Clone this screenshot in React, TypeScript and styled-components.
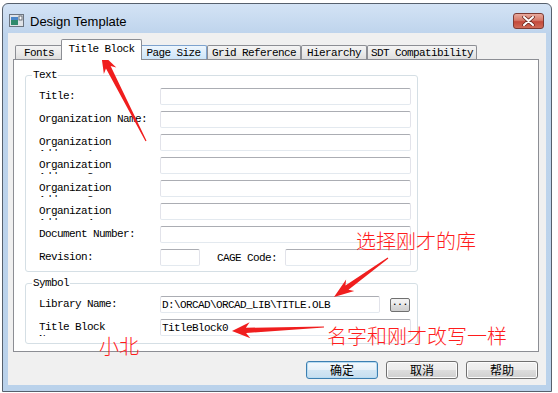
import React from 'react'
import styled, { createGlobalStyle } from 'styled-components'

const GlobalStyle = createGlobalStyle`
  html, body { margin: 0; padding: 0; background: #fff; }
  body { width: 558px; height: 393px; overflow: hidden; }
`

const mono = `'Liberation Mono', 'DejaVu Sans Mono', monospace`
const cjk = `'Noto Sans CJK SC', 'Noto Sans', sans-serif`

const Stage = styled.div`
  position: relative;
  width: 558px;
  height: 393px;
  padding: 3px 0 0 2px;
  box-sizing: border-box;
`

const Window = styled.div`
  width: 550px;
  height: 389px;
  box-sizing: border-box;
  border: 1px solid #56606d;
  border-radius: 6px 6px 0 0;
  background: linear-gradient(180deg, #d3e3f5 0px, #bed4ec 30px, #bad2eb 100%);
  display: flex;
  flex-direction: column;
`

const TitleBar = styled.div`
  height: 29px;
  display: flex;
  align-items: flex-start;
  padding-left: 6px;
`

const TitleIcon = styled.svg`
  margin-top: 10px;
  flex: none;
`

const TitleText = styled.span`
  margin: 10px 0 0 6px;
  font: 13px/15px 'Liberation Sans', Arial, sans-serif;
  color: #000;
`

const CloseButton = styled.div`
  margin: 9px 7px 0 auto;
  width: 31px;
  height: 16px;
  box-sizing: border-box;
  border: 1px solid #7d3a33;
  border-radius: 3px;
  background: linear-gradient(180deg, #e8a99d 0%, #d67a6a 45%, #c4493b 55%, #cf6b58 100%);
  display: flex;
  align-items: center;
  justify-content: center;
`

const Client = styled.div`
  flex: 1;
  margin: 0 5px 6px 5px;
  padding: 6px 7px 0 5px;
  background: #f0f0f0;
  display: flex;
  flex-direction: column;
`

const TabRow = styled.div`
  height: 20px;
  display: flex;
  align-items: flex-end;
  padding-left: 2px;
  position: relative;
  z-index: 1;
`

const Tab = styled.div<{ $w: number; $active?: boolean; $hover?: boolean }>`
  box-sizing: border-box;
  width: ${p => p.$w}px;
  height: ${p => (p.$active ? 21 : 14)}px;
  margin: 0 ${p => (p.$active ? -2 : 0)}px ${p => (p.$active ? -1 : 0)}px;
  position: relative;
  z-index: ${p => (p.$active ? 2 : 1)};
  border: 1px solid ${p => (p.$hover ? '#7da2ce' : '#8c8e94')};
  border-bottom: none;
  border-radius: 2px 2px 0 0;
  background: ${p =>
    p.$active
      ? '#fff'
      : p.$hover
      ? 'linear-gradient(180deg, #eef6fd 0%, #dcedfb 50%, #cde5f8 100%)'
      : 'linear-gradient(180deg, #f4f4f4 0%, #ebebeb 50%, #dedede 100%)'};
  display: flex;
  justify-content: center;
  align-items: ${p => (p.$active ? 'flex-start' : 'center')};
  padding-top: ${p => (p.$active ? 4 : 1)}px;
  font: 11px/11px ${mono};
  letter-spacing: -0.6px;
  color: #000;
  white-space: nowrap;
`

const Panel = styled.div`
  height: 293px;
  box-sizing: border-box;
  border: 1px solid #8c8e94;
  background: #fff;
  padding-left: 11px;
  display: flex;
  flex-direction: column;
`

const Group = styled.fieldset<{ $top: number }>`
  margin: ${p => p.$top}px 0 0 0;
  padding: 0;
  min-width: 0;
  width: 393px;
  box-sizing: border-box;
  border: 1px solid #d5dfe5;
  border-radius: 3px;
`

const Legend = styled.legend`
  margin-left: 6px;
  padding: 0 1px;
  font: 11px/12px ${mono};
  letter-spacing: -0.6px;
  color: #000;
`

const Rows = styled.div<{ $bottom: number }>`
  display: grid;
  grid-template-columns: 121px 1fr;
  grid-auto-rows: 17px;
  row-gap: 6px;
  padding: 7px 6px ${p => p.$bottom}px 13px;
`

// the dialog clips its static labels to the height of the field beside them
const Label = styled.div<{ $max?: number }>`
  height: 17px;
  max-width: ${p => p.$max ?? 112}px;
  box-sizing: border-box;
  padding-top: 2px;
  overflow: hidden;
  font: 11px/12px ${mono};
  letter-spacing: -0.6px;
  color: #000;
`

const Input = styled.input<{ $w?: number }>`
  box-sizing: border-box;
  width: ${p => (p.$w ? `${p.$w}px` : '100%')};
  height: 17px;
  margin: 0;
  padding: 0 1px;
  border: 1px solid #e2e3ea;
  border-top-color: #abadb3;
  border-bottom-color: #e3e9ef;
  border-radius: 2px;
  background: #fff;
  font: 11px/15px ${mono};
  letter-spacing: -0.6px;
  color: #000;
  outline: none;
`

const InlineRow = styled.div`
  display: flex;
  align-items: center;
  min-width: 0;
`

const InlineLabel = styled.span`
  margin-left: 17px;
  width: 68px;
  flex: none;
  font: 11px/12px ${mono};
  letter-spacing: -0.6px;
  color: #000;
`

const Browse = styled.div`
  margin-left: 10px;
  width: 20px;
  height: 14px;
  box-sizing: border-box;
  border: 1px solid #707070;
  border-radius: 2px;
  background: linear-gradient(180deg, #f2f2f2 0%, #ebebeb 50%, #dddddd 50%, #cfcfcf 100%);
  font: bold 9px/9px ${mono};
  text-align: center;
  color: #000;
`

const ButtonRow = styled.div`
  margin: 9px 1px 0 0;
  display: flex;
  justify-content: flex-end;
  gap: 8px;
`

const Button = styled.div<{ $default?: boolean }>`
  width: 72px;
  height: 18px;
  box-sizing: border-box;
  border: 1px solid ${p => (p.$default ? '#3c7fb1' : '#707070')};
  border-radius: 3px;
  background: ${p =>
    p.$default
      ? 'linear-gradient(180deg, #f4f9fd 0%, #e6f1f9 50%, #d3e6f4 50%, #c6def0 100%)'
      : 'linear-gradient(180deg, #f2f2f2 0%, #ebebeb 50%, #dddddd 50%, #cfcfcf 100%)'};
  box-shadow: ${p => (p.$default ? 'inset 0 0 0 1px #b9dcf2' : 'inset 0 0 0 1px #fcfcfc')};
  display: flex;
  align-items: center;
  justify-content: center;
  font: 12px/16px ${cjk};
  color: #000;
`

const Overlay = styled.svg`
  position: absolute;
  left: 0;
  top: 0;
  pointer-events: none;
`

const Note = styled.span<{ $x: number; $y: number }>`
  position: absolute;
  left: ${p => p.$x}px;
  top: ${p => p.$y}px;
  font: 300 20px/20px ${cjk};
  color: #ff1c1c;
  white-space: nowrap;
`

type Pt = [number, number]

// tapered annotation arrow: tip, tail, head length, head half width
const arrow = (tip: Pt, tail: Pt, head: number, half: number) => {
  const [tx, ty] = tip
  const [sx, sy] = tail
  const len = Math.hypot(sx - tx, sy - ty)
  const ux = (sx - tx) / len
  const uy = (sy - ty) / len
  const px = -uy
  const py = ux
  const at = (d: number, w: number): string => `${tx + ux * d + px * w},${ty + uy * d + py * w}`
  return [
    at(0, 0),
    at(head, half),
    at(head - 4, 2.6),
    at(len, 0.6),
    at(len, -0.6),
    at(head - 4, -2.6),
    at(head, -half),
  ].join(' ')
}

const WindowIcon = () => (
  <TitleIcon width="15" height="13" viewBox="0 0 15 13">
    <rect x="0.5" y="0.5" width="14" height="12" fill="#dfe3e8" stroke="#6b7480" />
    <rect x="2" y="3" width="7" height="8" fill="#2f8a6c" />
    <rect x="2" y="3" width="7" height="3" fill="#4a86c8" />
    <rect x="10" y="2" width="3" height="4" fill="#fff" stroke="#49525c" strokeWidth="0.8" />
  </TitleIcon>
)

const textRows = [
  'Title:',
  'Organization Name:',
  'Organization Address 1:',
  'Organization Address 2:',
  'Organization Address 3:',
  'Organization Address 4:',
  'Document Number:',
]

const App: React.FC = () => (
  <Stage>
    <GlobalStyle />
    <Window>
      <TitleBar>
        <WindowIcon />
        <TitleText>Design Template</TitleText>
        <CloseButton>
          <svg width="13" height="10" viewBox="0 0 13 10">
            <path d="M2 1 L11 9 M11 1 L2 9" stroke="#6b2a22" strokeWidth="3.6" strokeLinecap="round" />
            <path d="M2 1 L11 9 M11 1 L2 9" stroke="#fff" strokeWidth="2" strokeLinecap="round" />
          </svg>
        </CloseButton>
      </TitleBar>
      <Client>
        <TabRow>
          <Tab $w={48}>Fonts</Tab>
          <Tab $w={81} $active>Title Block</Tab>
          <Tab $w={67} $hover>Page Size</Tab>
          <Tab $w={94}>Grid Reference</Tab>
          <Tab $w={66}>Hierarchy</Tab>
          <Tab $w={110}>SDT Compatibility</Tab>
        </TabRow>
        <Panel>
          <Group $top={9}>
            <Legend>Text</Legend>
            <Rows $bottom={5}>
              {textRows.map(t => (
                <React.Fragment key={t}>
                  <Label>{t}</Label>
                  <Input readOnly value="" />
                </React.Fragment>
              ))}
              <Label>Revision:</Label>
              <InlineRow>
                <Input readOnly value="" $w={40} />
                <InlineLabel>CAGE Code:</InlineLabel>
                <Input readOnly value="" />
              </InlineRow>
            </Rows>
          </Group>
          <Group $top={5}>
            <Legend>Symbol</Legend>
            <Rows $bottom={7}>
              <Label>Library Name:</Label>
              <InlineRow>
                <Input readOnly value="D:\ORCAD\ORCAD_LIB\TITLE.OLB" $w={220} />
                <Browse>...</Browse>
              </InlineRow>
              <Label $max={96}>Title Block Name:</Label>
              <Input readOnly value="TitleBlock0" />
            </Rows>
          </Group>
        </Panel>
        <ButtonRow>
          <Button $default>确定</Button>
          <Button>取消</Button>
          <Button>帮助</Button>
        </ButtonRow>
      </Client>
    </Window>
    <Overlay width="558" height="393" viewBox="0 0 558 393">
      <polygon points={arrow([101, 53], [146, 141], 20, 7)} fill="#f01e1e" />
      <polygon points={arrow([334, 297], [388, 258], 20, 7)} fill="#f01e1e" />
      <polygon points={arrow([232, 331], [324, 327], 18, 8)} fill="#f01e1e" />
    </Overlay>
    <Note $x={356} $y={231}>选择刚才的库</Note>
    <Note $x={327} $y={326}>名字和刚才改写一样</Note>
    <Note $x={99} $y={336}>小北</Note>
  </Stage>
)

export default App
